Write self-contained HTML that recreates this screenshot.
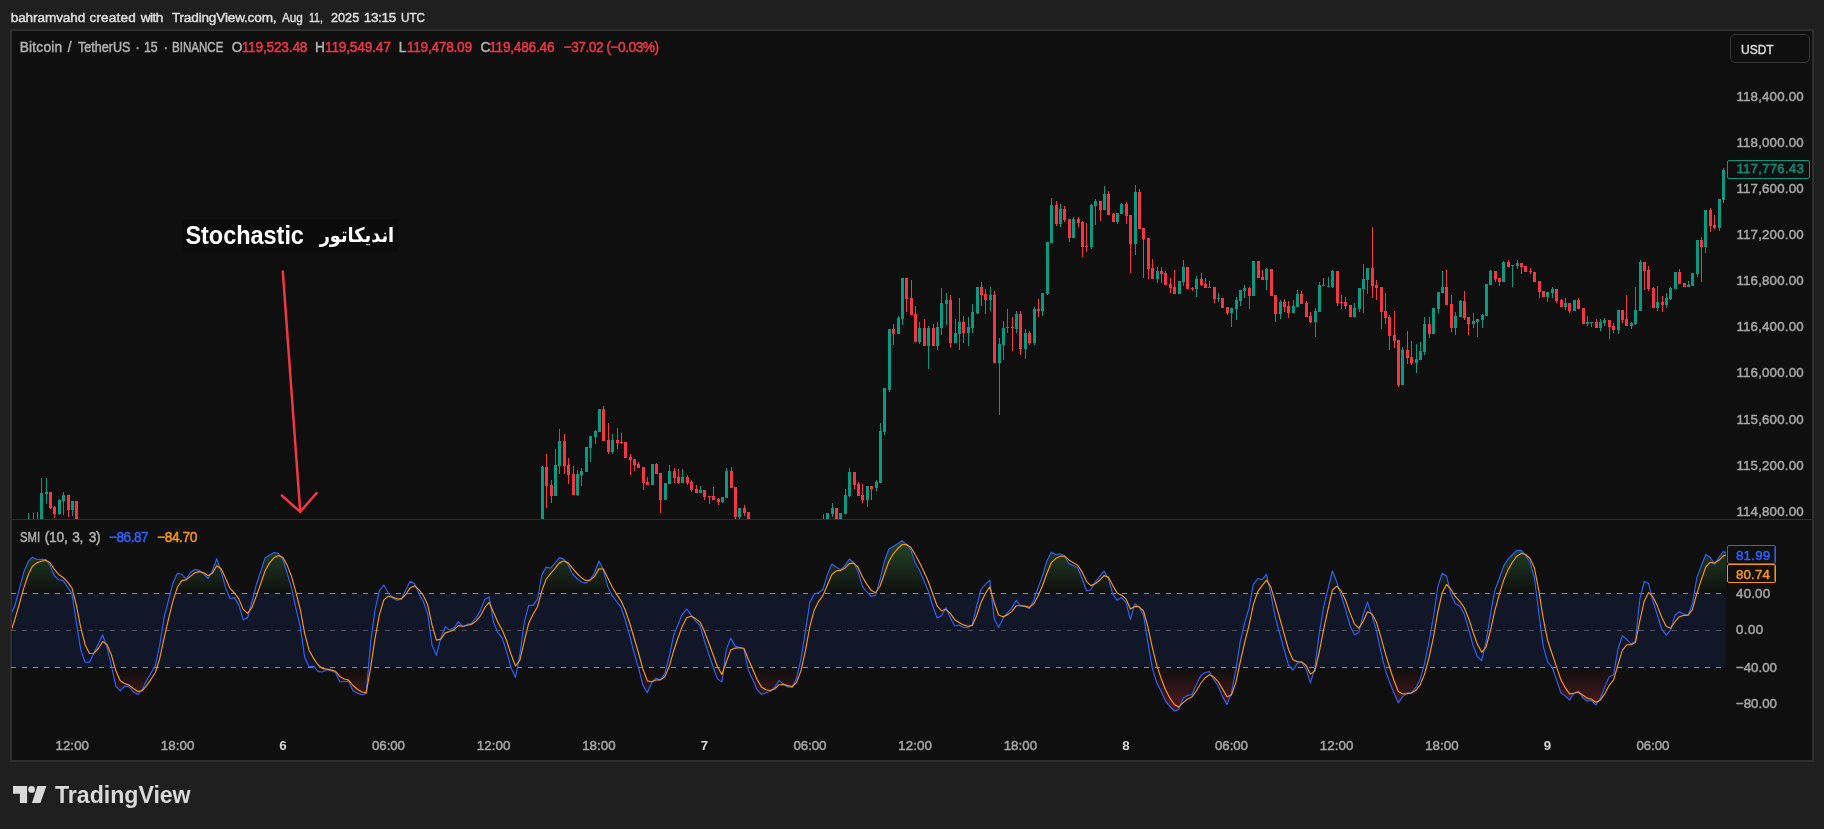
<!DOCTYPE html><html lang="en"><head><meta charset="utf-8"><title>BTCUSDT chart</title><style>html,body{margin:0;padding:0;background:#1f1f1f;}body{width:1824px;height:829px;position:relative;overflow:hidden;font-family:"Liberation Sans", "DejaVu Sans", sans-serif;}#frame{position:absolute;left:10px;top:29px;width:1800px;height:729px;border:2px solid #2e2e2e;background:#0f0f0f;}svg{position:absolute;left:0;top:0;}#txt{position:absolute;left:0;top:0;width:1824px;height:829px;will-change:transform;}.t{position:absolute;white-space:pre;line-height:1;}.usdt{position:absolute;left:1730px;top:34px;width:80px;height:29px;border:1px solid #363636;border-radius:5px;box-sizing:border-box;}.lbl{position:absolute;box-sizing:border-box;border:1px solid;border-radius:2px;background:#0f0f0f;}.lbl i{position:absolute;right:0;top:1px;bottom:1px;width:1px;opacity:.55;}.note{position:absolute;left:182px;top:219px;width:216px;height:33px;background:#0b0b0b;}</style></head><body><div id="frame"></div><svg width="1824" height="829" viewBox="0 0 1824 829" shape-rendering="crispEdges"><rect x="12" y="519" width="1800" height="1" fill="#2e2e2e"/><path fill="#089981" d="M28 513h1v6h-1zM41 478h1v41h-1zM40 493h3v26h-3zM46 478h1v26h-1zM45 492h3v2h-3zM59 499h1v16h-1zM58 500h3v14h-3zM63 492h1v23h-1zM62 495h3v6h-3zM72 501h1v15h-1zM71 501h3v9h-3zM542 466h1v53h-1zM541 467h3v52h-3zM555 449h1v47h-1zM554 465h3v31h-3zM559 429h1v45h-1zM558 441h3v25h-3zM577 470h1v26h-1zM576 474h3v21h-3zM581 468h1v18h-1zM580 471h3v4h-3zM586 447h1v25h-1zM585 447h3v25h-3zM590 436h1v26h-1zM589 436h3v12h-3zM595 430h1v14h-1zM594 431h3v6h-3zM599 409h1v23h-1zM598 409h3v23h-3zM612 434h1v20h-1zM611 440h3v12h-3zM652 464h1v21h-1zM651 464h3v21h-3zM665 483h1v17h-1zM664 483h3v17h-3zM669 465h1v19h-1zM668 471h3v13h-3zM682 469h1v14h-1zM681 477h3v6h-3zM700 486h1v7h-1zM699 490h3v3h-3zM722 497h1v6h-1zM721 497h3v5h-3zM726 468h1v30h-1zM725 471h3v27h-3zM739 508h1v11h-1zM738 508h3v9h-3zM823 514h1v5h-1zM827 513h1v6h-1zM826 513h3v6h-3zM832 503h1v14h-1zM831 508h3v6h-3zM840 513h1v6h-1zM839 513h3v6h-3zM845 489h1v25h-1zM844 495h3v19h-3zM849 468h1v29h-1zM848 472h3v24h-3zM867 486h1v21h-1zM866 486h3v14h-3zM876 480h1v11h-1zM875 482h3v6h-3zM880 423h1v60h-1zM879 431h3v52h-3zM884 388h1v47h-1zM883 388h3v44h-3zM889 329h1v63h-1zM888 329h3v61h-3zM898 316h1v18h-1zM897 318h3v16h-3zM902 278h1v47h-1zM901 278h3v41h-3zM919 322h1v22h-1zM918 328h3v14h-3zM928 326h1v43h-1zM927 328h3v18h-3zM937 322h1v28h-1zM936 327h3v19h-3zM941 288h1v47h-1zM940 303h3v25h-3zM946 293h1v32h-1zM945 300h3v4h-3zM955 319h1v24h-1zM954 333h3v10h-3zM959 298h1v52h-1zM958 322h3v12h-3zM968 317h1v29h-1zM967 327h3v6h-3zM972 304h1v29h-1zM971 312h3v16h-3zM977 287h1v27h-1zM976 287h3v26h-3zM990 287h1v24h-1zM989 295h3v5h-3zM999 338h1v77h-1zM998 344h3v19h-3zM1003 321h1v39h-1zM1002 328h3v17h-3zM1007 309h1v24h-1zM1006 327h3v1h-3zM1016 311h1v22h-1zM1015 314h3v15h-3zM1025 329h1v30h-1zM1024 333h3v16h-3zM1034 307h1v38h-1zM1033 309h3v34h-3zM1042 293h1v23h-1zM1041 293h3v18h-3zM1047 242h1v53h-1zM1046 242h3v52h-3zM1051 198h1v45h-1zM1050 205h3v38h-3zM1060 204h1v23h-1zM1059 209h3v15h-3zM1073 217h1v21h-1zM1072 219h3v19h-3zM1091 204h1v45h-1zM1090 205h3v42h-3zM1095 199h1v26h-1zM1094 201h3v5h-3zM1104 186h1v24h-1zM1103 194h3v16h-3zM1117 213h1v11h-1zM1116 213h3v9h-3zM1121 203h1v11h-1zM1120 204h3v10h-3zM1135 185h1v70h-1zM1134 192h3v52h-3zM1157 267h1v16h-1zM1156 271h3v8h-3zM1179 281h1v13h-1zM1178 281h3v13h-3zM1183 260h1v26h-1zM1182 267h3v15h-3zM1196 276h1v21h-1zM1195 279h3v10h-3zM1218 293h1v9h-1zM1217 298h3v1h-3zM1231 308h1v19h-1zM1230 308h3v5h-3zM1236 297h1v23h-1zM1235 300h3v9h-3zM1240 290h1v16h-1zM1239 290h3v11h-3zM1244 285h1v13h-1zM1243 288h3v3h-3zM1253 261h1v35h-1zM1252 261h3v35h-3zM1266 268h1v22h-1zM1265 269h3v11h-3zM1280 300h1v19h-1zM1279 302h3v12h-3zM1293 300h1v13h-1zM1292 306h3v7h-3zM1297 290h1v17h-1zM1296 294h3v13h-3zM1315 308h1v29h-1zM1314 311h3v11h-3zM1319 282h1v30h-1zM1318 285h3v27h-3zM1328 277h1v10h-1zM1327 286h3v1h-3zM1332 270h1v18h-1zM1331 271h3v16h-3zM1354 303h1v14h-1zM1353 308h3v9h-3zM1359 288h1v24h-1zM1358 288h3v21h-3zM1363 264h1v49h-1zM1362 279h3v10h-3zM1367 268h1v26h-1zM1366 268h3v12h-3zM1402 347h1v38h-1zM1401 350h3v35h-3zM1416 344h1v29h-1zM1415 359h3v4h-3zM1420 342h1v18h-1zM1419 351h3v9h-3zM1424 317h1v38h-1zM1423 324h3v28h-3zM1433 308h1v26h-1zM1432 308h3v26h-3zM1438 292h1v21h-1zM1437 292h3v17h-3zM1442 271h1v22h-1zM1441 287h3v6h-3zM1455 312h1v23h-1zM1454 316h3v12h-3zM1460 300h1v17h-1zM1459 301h3v16h-3zM1473 313h1v15h-1zM1472 321h3v3h-3zM1477 319h1v18h-1zM1476 319h3v3h-3zM1482 314h1v14h-1zM1481 315h3v5h-3zM1486 284h1v32h-1zM1485 284h3v32h-3zM1490 270h1v15h-1zM1489 271h3v14h-3zM1503 261h1v21h-1zM1502 262h3v20h-3zM1512 265h1v22h-1zM1511 265h3v1h-3zM1517 260h1v9h-1zM1516 263h3v3h-3zM1547 292h1v10h-1zM1546 292h3v5h-3zM1552 287h1v11h-1zM1551 289h3v4h-3zM1565 298h1v12h-1zM1564 303h3v4h-3zM1574 300h1v11h-1zM1573 300h3v11h-3zM1587 316h1v10h-1zM1586 322h3v2h-3zM1591 322h1v5h-1zM1590 322h3v1h-3zM1600 319h1v12h-1zM1599 322h3v6h-3zM1604 318h1v8h-1zM1603 320h3v3h-3zM1618 310h1v24h-1zM1617 310h3v20h-3zM1631 322h1v7h-1zM1630 323h3v3h-3zM1635 287h1v38h-1zM1634 310h3v14h-3zM1640 260h1v51h-1zM1639 262h3v49h-3zM1657 286h1v25h-1zM1656 302h3v6h-3zM1666 293h1v15h-1zM1665 298h3v7h-3zM1670 287h1v13h-1zM1669 288h3v11h-3zM1675 272h1v17h-1zM1674 272h3v17h-3zM1688 281h1v6h-1zM1687 285h3v2h-3zM1692 273h1v13h-1zM1691 273h3v13h-3zM1697 240h1v37h-1zM1696 240h3v34h-3zM1705 210h1v43h-1zM1704 210h3v37h-3zM1719 199h1v32h-1zM1718 199h3v29h-3zM1723 168h1v35h-1zM1722 170h3v30h-3z"/><path fill="#f23645" d="M33 513h1v6h-1zM37 512h1v7h-1zM50 492h1v17h-1zM49 492h3v16h-3zM54 506h1v12h-1zM53 507h3v7h-3zM68 495h1v22h-1zM67 495h3v15h-3zM76 501h1v18h-1zM75 501h3v18h-3zM546 454h1v54h-1zM545 467h3v19h-3zM551 480h1v23h-1zM550 485h3v11h-3zM564 434h1v40h-1zM563 441h3v25h-3zM568 458h1v26h-1zM567 465h3v10h-3zM573 466h1v29h-1zM572 474h3v21h-3zM603 406h1v35h-1zM602 409h3v32h-3zM608 423h1v31h-1zM607 440h3v12h-3zM617 428h1v21h-1zM616 440h3v3h-3zM621 433h1v11h-1zM620 442h3v1h-3zM625 442h1v16h-1zM624 442h3v16h-3zM630 454h1v21h-1zM629 457h3v3h-3zM634 459h1v12h-1zM633 459h3v6h-3zM638 462h1v6h-1zM637 464h3v4h-3zM643 467h1v23h-1zM642 467h3v16h-3zM647 477h1v8h-1zM646 482h3v3h-3zM656 463h1v11h-1zM655 464h3v10h-3zM660 473h1v40h-1zM659 473h3v27h-3zM674 468h1v15h-1zM673 471h3v7h-3zM678 469h1v15h-1zM677 477h3v6h-3zM687 475h1v10h-1zM686 477h3v6h-3zM691 480h1v12h-1zM690 482h3v8h-3zM696 485h1v8h-1zM695 489h3v4h-3zM704 490h1v10h-1zM703 490h3v7h-3zM709 496h1v8h-1zM708 496h3v1h-3zM713 487h1v13h-1zM712 496h3v4h-3zM718 498h1v7h-1zM717 499h3v3h-3zM731 467h1v21h-1zM730 471h3v17h-3zM735 487h1v32h-1zM734 487h3v30h-3zM744 505h1v11h-1zM743 508h3v5h-3zM748 512h1v7h-1zM747 512h3v7h-3zM836 508h1v11h-1zM835 508h3v11h-3zM854 472h1v17h-1zM853 472h3v13h-3zM858 482h1v14h-1zM857 484h3v12h-3zM862 484h1v19h-1zM861 495h3v5h-3zM871 486h1v14h-1zM870 486h3v3h-3zM893 324h1v21h-1zM892 329h3v5h-3zM906 278h1v34h-1zM905 278h3v21h-3zM911 280h1v35h-1zM910 298h3v17h-3zM915 306h1v36h-1zM914 314h3v28h-3zM924 319h1v27h-1zM923 328h3v18h-3zM933 324h1v22h-1zM932 328h3v18h-3zM950 295h1v53h-1zM949 300h3v43h-3zM963 316h1v27h-1zM962 322h3v11h-3zM981 282h1v24h-1zM980 287h3v8h-3zM985 289h1v25h-1zM984 294h3v6h-3zM994 291h1v72h-1zM993 295h3v68h-3zM1012 317h1v34h-1zM1011 327h3v1h-3zM1020 311h1v44h-1zM1019 314h3v35h-3zM1029 331h1v14h-1zM1028 333h3v10h-3zM1038 299h1v18h-1zM1037 309h3v2h-3zM1056 201h1v25h-1zM1055 205h3v19h-3zM1064 206h1v16h-1zM1063 209h3v11h-3zM1069 219h1v23h-1zM1068 219h3v19h-3zM1078 217h1v10h-1zM1077 219h3v4h-3zM1082 221h1v36h-1zM1081 222h3v25h-3zM1086 223h1v29h-1zM1085 246h3v1h-3zM1100 201h1v20h-1zM1099 201h3v9h-3zM1108 191h1v24h-1zM1107 194h3v21h-3zM1113 213h1v9h-1zM1112 214h3v8h-3zM1126 202h1v22h-1zM1125 204h3v12h-3zM1130 215h1v58h-1zM1129 215h3v29h-3zM1139 189h1v40h-1zM1138 192h3v37h-3zM1143 228h1v50h-1zM1142 228h3v11h-3zM1148 238h1v41h-1zM1147 238h3v31h-3zM1152 259h1v20h-1zM1151 268h3v11h-3zM1161 267h1v16h-1zM1160 271h3v3h-3zM1165 271h1v14h-1zM1164 273h3v12h-3zM1170 278h1v15h-1zM1169 284h3v4h-3zM1174 270h1v24h-1zM1173 287h3v7h-3zM1187 267h1v22h-1zM1186 267h3v22h-3zM1192 287h1v4h-1zM1191 288h3v1h-3zM1201 273h1v13h-1zM1200 279h3v6h-3zM1205 278h1v10h-1zM1204 284h3v4h-3zM1209 281h1v7h-1zM1208 287h3v1h-3zM1214 287h1v16h-1zM1213 287h3v12h-3zM1222 298h1v10h-1zM1221 298h3v10h-3zM1227 307h1v8h-1zM1226 307h3v6h-3zM1249 287h1v22h-1zM1248 288h3v8h-3zM1258 261h1v17h-1zM1257 261h3v17h-3zM1262 270h1v10h-1zM1261 277h3v3h-3zM1271 269h1v27h-1zM1270 269h3v27h-3zM1275 295h1v27h-1zM1274 295h3v19h-3zM1284 299h1v13h-1zM1283 302h3v5h-3zM1288 301h1v17h-1zM1287 306h3v7h-3zM1301 291h1v13h-1zM1300 294h3v10h-3zM1306 301h1v16h-1zM1305 303h3v14h-3zM1310 312h1v11h-1zM1309 316h3v6h-3zM1323 278h1v8h-1zM1322 285h3v1h-3zM1337 271h1v35h-1zM1336 271h3v32h-3zM1341 295h1v14h-1zM1340 302h3v1h-3zM1345 297h1v12h-1zM1344 302h3v4h-3zM1350 305h1v12h-1zM1349 305h3v12h-3zM1372 227h1v71h-1zM1371 268h3v18h-3zM1376 280h1v20h-1zM1375 285h3v3h-3zM1381 287h1v42h-1zM1380 287h3v25h-3zM1385 293h1v31h-1zM1384 311h3v7h-3zM1389 315h1v35h-1zM1388 317h3v19h-3zM1394 311h1v37h-1zM1393 335h3v6h-3zM1398 340h1v47h-1zM1397 340h3v45h-3zM1407 331h1v33h-1zM1406 350h3v8h-3zM1411 341h1v24h-1zM1410 357h3v6h-3zM1429 317h1v21h-1zM1428 324h3v10h-3zM1446 270h1v35h-1zM1445 287h3v18h-3zM1451 295h1v37h-1zM1450 304h3v24h-3zM1464 291h1v29h-1zM1463 301h3v17h-3zM1468 317h1v18h-1zM1467 317h3v7h-3zM1495 271h1v11h-1zM1494 271h3v8h-3zM1499 278h1v8h-1zM1498 278h3v4h-3zM1508 260h1v7h-1zM1507 262h3v5h-3zM1521 263h1v11h-1zM1520 263h3v4h-3zM1525 266h1v6h-1zM1524 266h3v6h-3zM1530 268h1v6h-1zM1529 271h3v1h-3zM1534 272h1v10h-1zM1533 272h3v10h-3zM1539 281h1v17h-1zM1538 281h3v11h-3zM1543 291h1v6h-1zM1542 291h3v6h-3zM1556 289h1v14h-1zM1555 289h3v12h-3zM1561 299h1v8h-1zM1560 300h3v7h-3zM1569 303h1v10h-1zM1568 303h3v8h-3zM1578 298h1v11h-1zM1577 300h3v9h-3zM1583 308h1v16h-1zM1582 308h3v16h-3zM1596 319h1v9h-1zM1595 322h3v6h-3zM1609 320h1v19h-1zM1608 320h3v7h-3zM1613 323h1v10h-1zM1612 326h3v4h-3zM1622 310h1v13h-1zM1621 310h3v10h-3zM1626 295h1v31h-1zM1625 319h3v7h-3zM1644 262h1v28h-1zM1643 262h3v9h-3zM1648 266h1v25h-1zM1647 270h3v19h-3zM1653 287h1v21h-1zM1652 288h3v20h-3zM1662 296h1v16h-1zM1661 302h3v3h-3zM1679 269h1v15h-1zM1678 272h3v12h-3zM1684 283h1v4h-1zM1683 283h3v4h-3zM1701 237h1v45h-1zM1700 240h3v7h-3zM1710 208h1v24h-1zM1709 210h3v16h-3zM1714 215h1v14h-1zM1713 225h3v3h-3z"/><g shape-rendering="geometricPrecision"><defs><clipPath id="cpo"><rect x="12" y="521" width="1714" height="205"/></clipPath><clipPath id="cup"><rect x="12" y="521" width="1714" height="72.5"/></clipPath><clipPath id="cdn"><rect x="12" y="667.5" width="1714" height="60"/></clipPath><linearGradient id="gup" gradientUnits="userSpaceOnUse" x1="0" y1="538" x2="0" y2="593.5"><stop offset="0" stop-color="#4caf50" stop-opacity="0.36"/><stop offset="1" stop-color="#4caf50" stop-opacity="0"/></linearGradient><linearGradient id="gdn" gradientUnits="userSpaceOnUse" x1="0" y1="667.5" x2="0" y2="723"><stop offset="0" stop-color="#f23645" stop-opacity="0"/><stop offset="1" stop-color="#f23645" stop-opacity="0.38"/></linearGradient></defs><rect x="12" y="593.5" width="1714" height="74.0" fill="#2962ff" fill-opacity="0.1"/><g clip-path="url(#cup)"><path d="M6.0 615.2L10.4 615.2L14.8 606.0L19.2 589.4L23.6 572.8L28.0 562.0L32.4 557.2L36.8 559.5L41.2 559.4L45.5 559.3L49.9 564.8L54.3 575.8L58.7 579.7L63.1 580.4L67.5 586.9L71.9 593.4L76.3 622.1L80.7 649.6L85.1 662.2L89.5 662.2L93.9 653.0L98.3 643.9L102.6 634.7L107.0 647.3L111.4 665.6L115.8 686.2L120.2 690.8L124.6 686.2L129.0 686.7L133.4 692.0L137.8 694.5L142.2 689.7L146.6 680.5L151.0 673.1L155.3 665.6L159.7 645.0L164.1 617.5L168.5 600.3L172.9 583.1L177.3 573.5L181.7 574.0L186.1 579.2L190.5 572.4L194.9 569.4L199.3 570.5L203.7 574.0L208.1 578.5L212.4 570.5L216.8 558.6L221.2 571.7L225.6 587.7L230.0 598.5L234.4 597.6L238.8 604.9L243.2 619.8L247.6 617.5L252.0 601.5L256.4 584.3L260.8 571.1L265.1 557.9L269.5 555.2L273.9 552.6L278.3 553.3L282.7 559.1L287.1 572.8L291.5 587.7L295.9 608.3L300.3 626.7L304.7 657.6L309.1 666.8L313.5 666.1L317.9 671.4L322.2 672.0L326.6 669.8L331.0 670.7L335.4 672.5L339.8 681.7L344.2 681.7L348.6 681.2L353.0 690.8L357.4 693.1L361.8 694.7L366.2 693.6L370.6 642.7L374.9 610.6L379.3 591.1L383.7 585.0L388.1 592.3L392.5 598.0L396.9 600.3L401.3 599.2L405.7 590.0L410.1 581.3L414.5 583.6L418.9 593.4L423.3 601.5L427.7 614.1L432.0 645.0L436.4 655.3L440.8 638.1L445.2 626.7L449.6 630.1L454.0 627.8L458.4 621.6L462.8 626.7L467.2 624.4L471.6 623.2L476.0 618.0L480.4 610.6L484.7 599.6L489.1 596.9L493.5 622.1L497.9 632.4L502.3 638.1L506.7 651.9L511.1 667.9L515.5 677.5L519.9 654.2L524.3 622.1L528.7 605.4L533.1 605.4L537.5 599.2L541.8 575.1L546.2 567.1L550.6 568.2L555.0 563.0L559.4 557.5L563.8 559.1L568.2 564.8L572.6 574.0L577.0 578.5L581.4 582.0L585.8 583.1L590.2 579.7L594.5 572.8L598.9 560.9L603.3 569.4L607.7 586.6L612.1 595.7L616.5 601.5L620.9 607.2L625.3 619.8L629.7 635.8L634.1 653.0L638.5 667.9L642.9 685.1L647.3 692.7L651.6 682.8L656.0 678.2L660.4 679.8L664.8 673.6L669.2 656.5L673.6 635.8L678.0 624.4L682.4 614.1L686.8 609.0L691.2 615.2L695.6 620.9L700.0 625.5L704.3 640.4L708.7 654.2L713.1 666.8L717.5 678.9L721.9 682.1L726.3 649.6L730.7 638.1L735.1 646.1L739.5 647.3L743.9 648.9L748.3 670.2L752.7 679.4L757.1 689.7L761.4 694.3L765.8 692.7L770.2 691.3L774.6 687.4L779.0 680.5L783.4 684.0L787.8 686.9L792.2 687.4L796.6 678.2L801.0 658.8L805.4 631.2L809.8 602.6L814.1 594.1L818.5 592.8L822.9 589.5L827.3 575.1L831.7 564.1L836.1 567.1L840.5 569.8L844.9 565.9L849.3 559.1L853.7 562.5L858.1 571.7L862.5 586.6L866.9 591.8L871.2 596.4L875.6 595.3L880.0 579.7L884.4 561.4L888.8 549.2L893.2 546.5L897.6 543.7L902.0 540.7L906.4 544.2L910.8 549.9L915.2 562.5L919.6 570.5L923.9 580.8L928.3 591.1L932.7 606.0L937.1 618.0L941.5 615.7L945.9 607.9L950.3 617.5L954.7 626.0L959.1 625.1L963.5 627.4L967.9 627.8L972.3 624.4L976.7 606.0L981.0 589.5L985.4 584.3L989.8 580.1L994.2 618.6L998.6 627.4L1003.0 618.6L1007.4 612.9L1011.8 607.9L1016.2 600.3L1020.6 605.6L1025.0 606.5L1029.4 608.8L1033.7 600.3L1038.1 587.7L1042.5 575.8L1046.9 560.7L1051.3 552.2L1055.7 554.5L1060.1 553.8L1064.5 556.1L1068.9 563.6L1073.3 565.5L1077.7 567.8L1082.1 578.5L1086.5 590.7L1090.8 590.0L1095.2 582.0L1099.6 576.7L1104.0 571.0L1108.4 578.5L1112.8 594.1L1117.2 600.3L1121.6 597.6L1126.0 602.6L1130.4 619.3L1134.8 603.8L1139.2 607.2L1143.5 615.2L1147.9 642.7L1152.3 667.9L1156.7 682.8L1161.1 691.3L1165.5 701.1L1169.9 706.4L1174.3 711.0L1178.7 709.6L1183.1 698.2L1187.5 695.4L1191.9 694.7L1196.3 685.1L1200.6 675.9L1205.0 672.5L1209.4 671.6L1213.8 679.4L1218.2 686.2L1222.6 696.6L1227.0 704.6L1231.4 693.1L1235.8 670.2L1240.2 641.6L1244.6 623.2L1249.0 608.3L1253.3 584.3L1257.7 578.5L1262.1 579.7L1266.5 574.4L1270.9 594.6L1275.3 617.5L1279.7 633.5L1284.1 649.6L1288.5 665.2L1292.9 670.2L1297.3 663.3L1301.7 662.2L1306.1 669.1L1310.4 682.8L1314.8 667.9L1319.2 633.5L1323.6 607.2L1328.0 588.9L1332.4 571.0L1336.8 582.0L1341.2 595.7L1345.6 609.5L1350.0 625.5L1354.4 634.7L1358.8 632.4L1363.1 615.2L1367.5 601.9L1371.9 615.7L1376.3 630.1L1380.7 650.7L1385.1 669.1L1389.5 681.7L1393.9 693.1L1398.3 702.8L1402.7 696.6L1407.1 693.1L1411.5 692.7L1415.9 687.4L1420.2 679.4L1424.6 663.3L1429.0 641.6L1433.4 617.5L1437.8 586.6L1442.2 573.3L1446.6 576.2L1451.0 594.6L1455.4 603.8L1459.8 606.0L1464.2 614.1L1468.6 629.0L1472.9 645.0L1477.3 656.5L1481.7 660.6L1486.1 641.6L1490.5 614.1L1494.9 590.0L1499.3 578.5L1503.7 565.9L1508.1 559.1L1512.5 554.5L1516.9 550.4L1521.3 550.4L1525.7 555.6L1530.0 562.5L1534.4 577.4L1538.8 612.9L1543.2 646.1L1547.6 662.2L1552.0 666.8L1556.4 679.4L1560.8 692.7L1565.2 695.9L1569.6 700.0L1574.0 692.7L1578.4 691.3L1582.7 697.7L1587.1 701.1L1591.5 700.5L1595.9 705.0L1600.3 698.2L1604.7 687.4L1609.1 677.1L1613.5 674.8L1617.9 649.6L1622.3 635.8L1626.7 639.3L1631.1 644.5L1635.5 640.4L1639.8 599.2L1644.2 581.5L1648.6 583.6L1653.0 601.5L1657.4 615.2L1661.8 629.0L1666.2 635.1L1670.6 630.1L1675.0 615.2L1679.4 611.8L1683.8 614.1L1688.2 614.8L1692.5 603.8L1696.9 577.4L1701.3 565.9L1705.7 554.5L1710.1 557.2L1714.5 564.1L1718.9 557.5L1723.3 551.5L1727.7 553.3L1727.7 593.5L6.0 593.5z" fill="url(#gup)"/></g><g clip-path="url(#cdn)"><path d="M6.0 615.2L10.4 615.2L14.8 606.0L19.2 589.4L23.6 572.8L28.0 562.0L32.4 557.2L36.8 559.5L41.2 559.4L45.5 559.3L49.9 564.8L54.3 575.8L58.7 579.7L63.1 580.4L67.5 586.9L71.9 593.4L76.3 622.1L80.7 649.6L85.1 662.2L89.5 662.2L93.9 653.0L98.3 643.9L102.6 634.7L107.0 647.3L111.4 665.6L115.8 686.2L120.2 690.8L124.6 686.2L129.0 686.7L133.4 692.0L137.8 694.5L142.2 689.7L146.6 680.5L151.0 673.1L155.3 665.6L159.7 645.0L164.1 617.5L168.5 600.3L172.9 583.1L177.3 573.5L181.7 574.0L186.1 579.2L190.5 572.4L194.9 569.4L199.3 570.5L203.7 574.0L208.1 578.5L212.4 570.5L216.8 558.6L221.2 571.7L225.6 587.7L230.0 598.5L234.4 597.6L238.8 604.9L243.2 619.8L247.6 617.5L252.0 601.5L256.4 584.3L260.8 571.1L265.1 557.9L269.5 555.2L273.9 552.6L278.3 553.3L282.7 559.1L287.1 572.8L291.5 587.7L295.9 608.3L300.3 626.7L304.7 657.6L309.1 666.8L313.5 666.1L317.9 671.4L322.2 672.0L326.6 669.8L331.0 670.7L335.4 672.5L339.8 681.7L344.2 681.7L348.6 681.2L353.0 690.8L357.4 693.1L361.8 694.7L366.2 693.6L370.6 642.7L374.9 610.6L379.3 591.1L383.7 585.0L388.1 592.3L392.5 598.0L396.9 600.3L401.3 599.2L405.7 590.0L410.1 581.3L414.5 583.6L418.9 593.4L423.3 601.5L427.7 614.1L432.0 645.0L436.4 655.3L440.8 638.1L445.2 626.7L449.6 630.1L454.0 627.8L458.4 621.6L462.8 626.7L467.2 624.4L471.6 623.2L476.0 618.0L480.4 610.6L484.7 599.6L489.1 596.9L493.5 622.1L497.9 632.4L502.3 638.1L506.7 651.9L511.1 667.9L515.5 677.5L519.9 654.2L524.3 622.1L528.7 605.4L533.1 605.4L537.5 599.2L541.8 575.1L546.2 567.1L550.6 568.2L555.0 563.0L559.4 557.5L563.8 559.1L568.2 564.8L572.6 574.0L577.0 578.5L581.4 582.0L585.8 583.1L590.2 579.7L594.5 572.8L598.9 560.9L603.3 569.4L607.7 586.6L612.1 595.7L616.5 601.5L620.9 607.2L625.3 619.8L629.7 635.8L634.1 653.0L638.5 667.9L642.9 685.1L647.3 692.7L651.6 682.8L656.0 678.2L660.4 679.8L664.8 673.6L669.2 656.5L673.6 635.8L678.0 624.4L682.4 614.1L686.8 609.0L691.2 615.2L695.6 620.9L700.0 625.5L704.3 640.4L708.7 654.2L713.1 666.8L717.5 678.9L721.9 682.1L726.3 649.6L730.7 638.1L735.1 646.1L739.5 647.3L743.9 648.9L748.3 670.2L752.7 679.4L757.1 689.7L761.4 694.3L765.8 692.7L770.2 691.3L774.6 687.4L779.0 680.5L783.4 684.0L787.8 686.9L792.2 687.4L796.6 678.2L801.0 658.8L805.4 631.2L809.8 602.6L814.1 594.1L818.5 592.8L822.9 589.5L827.3 575.1L831.7 564.1L836.1 567.1L840.5 569.8L844.9 565.9L849.3 559.1L853.7 562.5L858.1 571.7L862.5 586.6L866.9 591.8L871.2 596.4L875.6 595.3L880.0 579.7L884.4 561.4L888.8 549.2L893.2 546.5L897.6 543.7L902.0 540.7L906.4 544.2L910.8 549.9L915.2 562.5L919.6 570.5L923.9 580.8L928.3 591.1L932.7 606.0L937.1 618.0L941.5 615.7L945.9 607.9L950.3 617.5L954.7 626.0L959.1 625.1L963.5 627.4L967.9 627.8L972.3 624.4L976.7 606.0L981.0 589.5L985.4 584.3L989.8 580.1L994.2 618.6L998.6 627.4L1003.0 618.6L1007.4 612.9L1011.8 607.9L1016.2 600.3L1020.6 605.6L1025.0 606.5L1029.4 608.8L1033.7 600.3L1038.1 587.7L1042.5 575.8L1046.9 560.7L1051.3 552.2L1055.7 554.5L1060.1 553.8L1064.5 556.1L1068.9 563.6L1073.3 565.5L1077.7 567.8L1082.1 578.5L1086.5 590.7L1090.8 590.0L1095.2 582.0L1099.6 576.7L1104.0 571.0L1108.4 578.5L1112.8 594.1L1117.2 600.3L1121.6 597.6L1126.0 602.6L1130.4 619.3L1134.8 603.8L1139.2 607.2L1143.5 615.2L1147.9 642.7L1152.3 667.9L1156.7 682.8L1161.1 691.3L1165.5 701.1L1169.9 706.4L1174.3 711.0L1178.7 709.6L1183.1 698.2L1187.5 695.4L1191.9 694.7L1196.3 685.1L1200.6 675.9L1205.0 672.5L1209.4 671.6L1213.8 679.4L1218.2 686.2L1222.6 696.6L1227.0 704.6L1231.4 693.1L1235.8 670.2L1240.2 641.6L1244.6 623.2L1249.0 608.3L1253.3 584.3L1257.7 578.5L1262.1 579.7L1266.5 574.4L1270.9 594.6L1275.3 617.5L1279.7 633.5L1284.1 649.6L1288.5 665.2L1292.9 670.2L1297.3 663.3L1301.7 662.2L1306.1 669.1L1310.4 682.8L1314.8 667.9L1319.2 633.5L1323.6 607.2L1328.0 588.9L1332.4 571.0L1336.8 582.0L1341.2 595.7L1345.6 609.5L1350.0 625.5L1354.4 634.7L1358.8 632.4L1363.1 615.2L1367.5 601.9L1371.9 615.7L1376.3 630.1L1380.7 650.7L1385.1 669.1L1389.5 681.7L1393.9 693.1L1398.3 702.8L1402.7 696.6L1407.1 693.1L1411.5 692.7L1415.9 687.4L1420.2 679.4L1424.6 663.3L1429.0 641.6L1433.4 617.5L1437.8 586.6L1442.2 573.3L1446.6 576.2L1451.0 594.6L1455.4 603.8L1459.8 606.0L1464.2 614.1L1468.6 629.0L1472.9 645.0L1477.3 656.5L1481.7 660.6L1486.1 641.6L1490.5 614.1L1494.9 590.0L1499.3 578.5L1503.7 565.9L1508.1 559.1L1512.5 554.5L1516.9 550.4L1521.3 550.4L1525.7 555.6L1530.0 562.5L1534.4 577.4L1538.8 612.9L1543.2 646.1L1547.6 662.2L1552.0 666.8L1556.4 679.4L1560.8 692.7L1565.2 695.9L1569.6 700.0L1574.0 692.7L1578.4 691.3L1582.7 697.7L1587.1 701.1L1591.5 700.5L1595.9 705.0L1600.3 698.2L1604.7 687.4L1609.1 677.1L1613.5 674.8L1617.9 649.6L1622.3 635.8L1626.7 639.3L1631.1 644.5L1635.5 640.4L1639.8 599.2L1644.2 581.5L1648.6 583.6L1653.0 601.5L1657.4 615.2L1661.8 629.0L1666.2 635.1L1670.6 630.1L1675.0 615.2L1679.4 611.8L1683.8 614.1L1688.2 614.8L1692.5 603.8L1696.9 577.4L1701.3 565.9L1705.7 554.5L1710.1 557.2L1714.5 564.1L1718.9 557.5L1723.3 551.5L1727.7 553.3L1727.7 667.5L6.0 667.5z" fill="url(#gdn)"/></g><path d="M11 593.5H1726" stroke="#8c8c8c" stroke-opacity="1" stroke-width="1" stroke-dasharray="5 6" fill="none"/><path d="M11 630.5H1726" stroke="#8c8c8c" stroke-opacity="0.5" stroke-width="1" stroke-dasharray="5 6" fill="none"/><path d="M11 667.5H1726" stroke="#8c8c8c" stroke-opacity="1" stroke-width="1" stroke-dasharray="5 6" fill="none"/><g clip-path="url(#cpo)" fill="none" stroke-linejoin="round" stroke-linecap="round" stroke-width="1.15"><path d="M6.0 615.2L10.4 615.2L14.8 606.0L19.2 589.4L23.6 572.8L28.0 562.0L32.4 557.2L36.8 559.5L41.2 559.4L45.5 559.3L49.9 564.8L54.3 575.8L58.7 579.7L63.1 580.4L67.5 586.9L71.9 593.4L76.3 622.1L80.7 649.6L85.1 662.2L89.5 662.2L93.9 653.0L98.3 643.9L102.6 634.7L107.0 647.3L111.4 665.6L115.8 686.2L120.2 690.8L124.6 686.2L129.0 686.7L133.4 692.0L137.8 694.5L142.2 689.7L146.6 680.5L151.0 673.1L155.3 665.6L159.7 645.0L164.1 617.5L168.5 600.3L172.9 583.1L177.3 573.5L181.7 574.0L186.1 579.2L190.5 572.4L194.9 569.4L199.3 570.5L203.7 574.0L208.1 578.5L212.4 570.5L216.8 558.6L221.2 571.7L225.6 587.7L230.0 598.5L234.4 597.6L238.8 604.9L243.2 619.8L247.6 617.5L252.0 601.5L256.4 584.3L260.8 571.1L265.1 557.9L269.5 555.2L273.9 552.6L278.3 553.3L282.7 559.1L287.1 572.8L291.5 587.7L295.9 608.3L300.3 626.7L304.7 657.6L309.1 666.8L313.5 666.1L317.9 671.4L322.2 672.0L326.6 669.8L331.0 670.7L335.4 672.5L339.8 681.7L344.2 681.7L348.6 681.2L353.0 690.8L357.4 693.1L361.8 694.7L366.2 693.6L370.6 642.7L374.9 610.6L379.3 591.1L383.7 585.0L388.1 592.3L392.5 598.0L396.9 600.3L401.3 599.2L405.7 590.0L410.1 581.3L414.5 583.6L418.9 593.4L423.3 601.5L427.7 614.1L432.0 645.0L436.4 655.3L440.8 638.1L445.2 626.7L449.6 630.1L454.0 627.8L458.4 621.6L462.8 626.7L467.2 624.4L471.6 623.2L476.0 618.0L480.4 610.6L484.7 599.6L489.1 596.9L493.5 622.1L497.9 632.4L502.3 638.1L506.7 651.9L511.1 667.9L515.5 677.5L519.9 654.2L524.3 622.1L528.7 605.4L533.1 605.4L537.5 599.2L541.8 575.1L546.2 567.1L550.6 568.2L555.0 563.0L559.4 557.5L563.8 559.1L568.2 564.8L572.6 574.0L577.0 578.5L581.4 582.0L585.8 583.1L590.2 579.7L594.5 572.8L598.9 560.9L603.3 569.4L607.7 586.6L612.1 595.7L616.5 601.5L620.9 607.2L625.3 619.8L629.7 635.8L634.1 653.0L638.5 667.9L642.9 685.1L647.3 692.7L651.6 682.8L656.0 678.2L660.4 679.8L664.8 673.6L669.2 656.5L673.6 635.8L678.0 624.4L682.4 614.1L686.8 609.0L691.2 615.2L695.6 620.9L700.0 625.5L704.3 640.4L708.7 654.2L713.1 666.8L717.5 678.9L721.9 682.1L726.3 649.6L730.7 638.1L735.1 646.1L739.5 647.3L743.9 648.9L748.3 670.2L752.7 679.4L757.1 689.7L761.4 694.3L765.8 692.7L770.2 691.3L774.6 687.4L779.0 680.5L783.4 684.0L787.8 686.9L792.2 687.4L796.6 678.2L801.0 658.8L805.4 631.2L809.8 602.6L814.1 594.1L818.5 592.8L822.9 589.5L827.3 575.1L831.7 564.1L836.1 567.1L840.5 569.8L844.9 565.9L849.3 559.1L853.7 562.5L858.1 571.7L862.5 586.6L866.9 591.8L871.2 596.4L875.6 595.3L880.0 579.7L884.4 561.4L888.8 549.2L893.2 546.5L897.6 543.7L902.0 540.7L906.4 544.2L910.8 549.9L915.2 562.5L919.6 570.5L923.9 580.8L928.3 591.1L932.7 606.0L937.1 618.0L941.5 615.7L945.9 607.9L950.3 617.5L954.7 626.0L959.1 625.1L963.5 627.4L967.9 627.8L972.3 624.4L976.7 606.0L981.0 589.5L985.4 584.3L989.8 580.1L994.2 618.6L998.6 627.4L1003.0 618.6L1007.4 612.9L1011.8 607.9L1016.2 600.3L1020.6 605.6L1025.0 606.5L1029.4 608.8L1033.7 600.3L1038.1 587.7L1042.5 575.8L1046.9 560.7L1051.3 552.2L1055.7 554.5L1060.1 553.8L1064.5 556.1L1068.9 563.6L1073.3 565.5L1077.7 567.8L1082.1 578.5L1086.5 590.7L1090.8 590.0L1095.2 582.0L1099.6 576.7L1104.0 571.0L1108.4 578.5L1112.8 594.1L1117.2 600.3L1121.6 597.6L1126.0 602.6L1130.4 619.3L1134.8 603.8L1139.2 607.2L1143.5 615.2L1147.9 642.7L1152.3 667.9L1156.7 682.8L1161.1 691.3L1165.5 701.1L1169.9 706.4L1174.3 711.0L1178.7 709.6L1183.1 698.2L1187.5 695.4L1191.9 694.7L1196.3 685.1L1200.6 675.9L1205.0 672.5L1209.4 671.6L1213.8 679.4L1218.2 686.2L1222.6 696.6L1227.0 704.6L1231.4 693.1L1235.8 670.2L1240.2 641.6L1244.6 623.2L1249.0 608.3L1253.3 584.3L1257.7 578.5L1262.1 579.7L1266.5 574.4L1270.9 594.6L1275.3 617.5L1279.7 633.5L1284.1 649.6L1288.5 665.2L1292.9 670.2L1297.3 663.3L1301.7 662.2L1306.1 669.1L1310.4 682.8L1314.8 667.9L1319.2 633.5L1323.6 607.2L1328.0 588.9L1332.4 571.0L1336.8 582.0L1341.2 595.7L1345.6 609.5L1350.0 625.5L1354.4 634.7L1358.8 632.4L1363.1 615.2L1367.5 601.9L1371.9 615.7L1376.3 630.1L1380.7 650.7L1385.1 669.1L1389.5 681.7L1393.9 693.1L1398.3 702.8L1402.7 696.6L1407.1 693.1L1411.5 692.7L1415.9 687.4L1420.2 679.4L1424.6 663.3L1429.0 641.6L1433.4 617.5L1437.8 586.6L1442.2 573.3L1446.6 576.2L1451.0 594.6L1455.4 603.8L1459.8 606.0L1464.2 614.1L1468.6 629.0L1472.9 645.0L1477.3 656.5L1481.7 660.6L1486.1 641.6L1490.5 614.1L1494.9 590.0L1499.3 578.5L1503.7 565.9L1508.1 559.1L1512.5 554.5L1516.9 550.4L1521.3 550.4L1525.7 555.6L1530.0 562.5L1534.4 577.4L1538.8 612.9L1543.2 646.1L1547.6 662.2L1552.0 666.8L1556.4 679.4L1560.8 692.7L1565.2 695.9L1569.6 700.0L1574.0 692.7L1578.4 691.3L1582.7 697.7L1587.1 701.1L1591.5 700.5L1595.9 705.0L1600.3 698.2L1604.7 687.4L1609.1 677.1L1613.5 674.8L1617.9 649.6L1622.3 635.8L1626.7 639.3L1631.1 644.5L1635.5 640.4L1639.8 599.2L1644.2 581.5L1648.6 583.6L1653.0 601.5L1657.4 615.2L1661.8 629.0L1666.2 635.1L1670.6 630.1L1675.0 615.2L1679.4 611.8L1683.8 614.1L1688.2 614.8L1692.5 603.8L1696.9 577.4L1701.3 565.9L1705.7 554.5L1710.1 557.2L1714.5 564.1L1718.9 557.5L1723.3 551.5L1727.7 553.3" stroke="#2962ff"/><path d="M6.0 650.7L10.4 633.0L14.8 619.5L19.2 604.5L23.6 588.6L28.0 575.3L32.4 566.3L36.8 562.9L41.2 561.2L45.5 560.2L49.9 562.5L54.3 569.1L58.7 574.4L63.1 577.4L67.5 582.2L71.9 587.8L76.3 604.9L80.7 627.3L85.1 644.7L89.5 653.5L93.9 653.2L98.3 648.5L102.6 641.6L107.0 644.5L111.4 655.0L115.8 670.6L120.2 680.7L124.6 683.5L129.0 685.1L133.4 688.5L137.8 691.5L142.2 690.6L146.6 685.6L151.0 679.3L155.3 672.5L159.7 658.7L164.1 638.1L168.5 619.2L172.9 601.2L177.3 587.3L181.7 580.6L186.1 579.9L190.5 576.1L194.9 572.8L199.3 571.6L203.7 572.8L208.1 575.7L212.4 573.1L216.8 565.8L221.2 568.8L225.6 578.2L230.0 588.4L234.4 593.0L238.8 598.9L243.2 609.4L247.6 613.4L252.0 607.4L256.4 595.9L260.8 583.5L265.1 570.7L269.5 562.9L273.9 557.8L278.3 555.6L282.7 557.3L287.1 565.1L291.5 576.4L295.9 592.4L300.3 609.5L304.7 633.6L309.1 650.2L313.5 658.1L317.9 664.7L322.2 668.4L326.6 669.1L331.0 669.9L335.4 671.2L339.8 676.4L344.2 679.0L348.6 680.1L353.0 685.5L357.4 689.3L361.8 692.0L366.2 692.8L370.6 667.8L374.9 639.2L379.3 615.2L383.7 600.1L388.1 596.2L392.5 597.1L396.9 598.7L401.3 598.9L405.7 594.5L410.1 587.9L414.5 585.7L418.9 589.6L423.3 595.5L427.7 604.8L432.0 624.9L436.4 640.1L440.8 639.1L445.2 632.9L449.6 631.5L454.0 629.7L458.4 625.6L462.8 626.2L467.2 625.3L471.6 624.2L476.0 621.1L480.4 615.9L484.7 607.7L489.1 602.3L493.5 612.2L497.9 622.3L502.3 630.2L506.7 641.0L511.1 654.5L515.5 666.0L519.9 660.1L524.3 641.1L528.7 623.2L533.1 614.3L537.5 606.7L541.8 590.9L546.2 579.0L550.6 573.6L555.0 568.3L559.4 562.9L563.8 561.0L568.2 562.9L572.6 568.4L577.0 573.5L581.4 577.7L585.8 580.4L590.2 580.1L594.5 576.4L598.9 568.7L603.3 569.0L607.7 577.8L612.1 586.8L616.5 594.1L620.9 600.6L625.3 610.2L629.7 623.0L634.1 638.0L638.5 653.0L642.9 669.0L647.3 680.9L651.6 681.8L656.0 680.0L660.4 679.9L664.8 676.8L669.2 666.6L673.6 651.2L678.0 637.8L682.4 625.9L686.8 617.5L691.2 616.3L695.6 618.6L700.0 622.1L704.3 631.2L708.7 642.7L713.1 654.7L717.5 666.8L721.9 674.5L726.3 662.0L730.7 650.1L735.1 648.1L739.5 647.7L743.9 648.3L748.3 659.3L752.7 669.3L757.1 679.5L761.4 686.9L765.8 689.8L770.2 690.5L774.6 689.0L779.0 684.7L783.4 684.4L787.8 685.6L792.2 686.5L796.6 682.4L801.0 670.6L805.4 650.9L809.8 626.8L814.1 610.4L818.5 601.6L822.9 595.6L827.3 585.3L831.7 574.7L836.1 570.9L840.5 570.4L844.9 568.2L849.3 563.6L853.7 563.1L858.1 567.4L862.5 577.0L866.9 584.4L871.2 590.4L875.6 592.8L880.0 586.3L884.4 573.8L888.8 561.5L893.2 554.0L897.6 548.8L902.0 544.8L906.4 544.5L910.8 547.2L915.2 554.8L919.6 562.7L923.9 571.8L928.3 581.5L932.7 593.7L937.1 605.9L941.5 610.8L945.9 609.3L950.3 613.4L954.7 619.7L959.1 622.4L963.5 624.9L967.9 626.3L972.3 625.4L976.7 615.7L981.0 602.6L985.4 593.4L989.8 586.8L994.2 602.7L998.6 615.0L1003.0 616.8L1007.4 614.9L1011.8 611.4L1016.2 605.8L1020.6 605.7L1025.0 606.1L1029.4 607.4L1033.7 603.9L1038.1 595.8L1042.5 585.8L1046.9 573.2L1051.3 562.7L1055.7 558.6L1060.1 556.2L1064.5 556.1L1068.9 559.9L1073.3 562.7L1077.7 565.2L1082.1 571.9L1086.5 581.3L1090.8 585.6L1095.2 583.8L1099.6 580.3L1104.0 575.6L1108.4 577.1L1112.8 585.6L1117.2 593.0L1121.6 595.3L1126.0 598.9L1130.4 609.1L1134.8 606.4L1139.2 606.8L1143.5 611.0L1147.9 626.9L1152.3 647.4L1156.7 665.1L1161.1 678.2L1165.5 689.7L1169.9 698.0L1174.3 704.5L1178.7 707.1L1183.1 702.6L1187.5 699.0L1191.9 696.9L1196.3 691.0L1200.6 683.5L1205.0 678.0L1209.4 674.8L1213.8 677.1L1218.2 681.7L1222.6 689.1L1227.0 696.8L1231.4 695.0L1235.8 682.6L1240.2 662.1L1244.6 642.7L1249.0 625.5L1253.3 604.9L1257.7 591.7L1262.1 585.7L1266.5 580.1L1270.9 587.3L1275.3 602.4L1279.7 618.0L1284.1 633.8L1288.5 649.5L1292.9 659.8L1297.3 661.6L1301.7 661.9L1306.1 665.5L1310.4 674.1L1314.8 671.0L1319.2 652.3L1323.6 629.7L1328.0 609.3L1332.4 590.1L1336.8 586.1L1341.2 590.9L1345.6 600.2L1350.0 612.9L1354.4 623.8L1358.8 628.1L1363.1 621.6L1367.5 611.8L1371.9 613.7L1376.3 621.9L1380.7 636.3L1385.1 652.7L1389.5 667.2L1393.9 680.2L1398.3 691.5L1402.7 694.0L1407.1 693.6L1411.5 693.1L1415.9 690.3L1420.2 684.8L1424.6 674.1L1429.0 657.8L1433.4 637.7L1437.8 612.1L1442.2 592.7L1446.6 584.5L1451.0 589.5L1455.4 596.6L1459.8 601.3L1464.2 607.7L1468.6 618.3L1472.9 631.7L1477.3 644.1L1481.7 652.3L1486.1 646.9L1490.5 630.5L1494.9 610.3L1499.3 594.4L1503.7 580.2L1508.1 569.6L1512.5 562.0L1516.9 556.2L1521.3 553.3L1525.7 554.5L1530.0 558.5L1534.4 567.9L1538.8 590.4L1543.2 618.3L1547.6 640.2L1552.0 653.5L1556.4 666.4L1560.8 679.6L1565.2 687.7L1569.6 693.9L1574.0 693.3L1578.4 692.3L1582.7 695.0L1587.1 698.1L1591.5 699.3L1595.9 702.2L1600.3 700.2L1604.7 693.8L1609.1 685.4L1613.5 680.1L1617.9 664.8L1622.3 650.3L1626.7 644.8L1631.1 644.7L1635.5 642.5L1639.8 620.9L1644.2 601.2L1648.6 592.4L1653.0 596.9L1657.4 606.1L1661.8 617.5L1666.2 626.3L1670.6 628.2L1675.0 621.7L1679.4 616.7L1683.8 615.4L1688.2 615.1L1692.5 609.4L1696.9 593.4L1701.3 579.7L1705.7 567.1L1710.1 562.2L1714.5 563.1L1718.9 560.3L1723.3 555.9L1727.7 554.6" stroke="#ff9800"/></g></g><g shape-rendering="geometricPrecision" fill="none" stroke="#f23645" stroke-width="2.5" stroke-linecap="round" stroke-linejoin="round"><path d="M282.8 271.5L300.2 511.5"/><path d="M281.8 495.5L300.2 511.8L316.6 493"/></g></svg><div class="usdt"></div><div class="lbl" style="left:1727px;top:160px;width:83px;height:19px;border-color:#089981"></div><div class="lbl" style="left:1727px;top:545px;width:49px;height:19px;border-color:#2962ff"><i style="background:#2962ff"></i></div><div class="lbl" style="left:1727px;top:564px;width:49px;height:19px;border-color:#ff9800"><i style="background:#ff9800"></i></div><div class="note"></div><div id="txt"><span class="t" id="hd0" style="left:10.72px;top:11.00px;font-size:13.6px;color:#dedede;letter-spacing:-0.111px;-webkit-text-stroke:0.45px #dedede;">bahramvahd</span><span class="t" id="hd1" style="left:89.41px;top:11.00px;font-size:13.6px;color:#dedede;letter-spacing:0.159px;-webkit-text-stroke:0.45px #dedede;">created</span><span class="t" id="hd2" style="left:140.75px;top:11.00px;font-size:13.6px;color:#dedede;letter-spacing:-0.530px;-webkit-text-stroke:0.45px #dedede;">with</span><span class="t" id="hd3" style="left:171.90px;top:11.00px;font-size:13.6px;color:#dedede;letter-spacing:-0.175px;-webkit-text-stroke:0.45px #dedede;">TradingView.com,</span><span class="t" id="hd4" style="left:281.80px;top:11.00px;font-size:13.6px;color:#dedede;-webkit-text-stroke:0.45px #dedede;transform:scale(0.8641,1);transform-origin:0 84.65%;">Aug</span><span class="t" id="hd5" style="left:308.64px;top:11.00px;font-size:13.6px;color:#dedede;-webkit-text-stroke:0.45px #dedede;transform:scale(0.7726,1);transform-origin:0 84.65%;">11,</span><span class="t" id="hd6" style="left:330.70px;top:11.00px;font-size:13.6px;color:#dedede;-webkit-text-stroke:0.45px #dedede;transform:scale(0.9318,1);transform-origin:0 84.65%;">2025</span><span class="t" id="hd7" style="left:363.78px;top:11.00px;font-size:13.6px;color:#dedede;letter-spacing:-0.397px;-webkit-text-stroke:0.45px #dedede;">13:15</span><span class="t" id="hd8" style="left:401.36px;top:11.00px;font-size:13.6px;color:#dedede;-webkit-text-stroke:0.45px #dedede;transform:scale(0.8610,1);transform-origin:0 84.65%;">UTC</span><span class="t" id="lw0" style="left:19.76px;top:41.00px;font-size:13.7px;color:#b2b2b2;letter-spacing:0.204px;-webkit-text-stroke:0.45px #b2b2b2;transform:scale(1.0000,1.07);transform-origin:0 84.65%;">Bitcoin</span><span class="t" id="lw1" style="left:67.76px;top:41.00px;font-size:13.7px;color:#b2b2b2;-webkit-text-stroke:0.45px #b2b2b2;transform:scale(1.0000,1.07);transform-origin:0 84.65%;">/</span><span class="t" id="lw2" style="left:78.30px;top:41.00px;font-size:13.7px;color:#b2b2b2;-webkit-text-stroke:0.45px #b2b2b2;transform:scale(0.9202,1.07);transform-origin:0 84.65%;">TetherUS</span><span class="t" id="lw3" style="left:135.13px;top:41.00px;font-size:13.7px;color:#b2b2b2;-webkit-text-stroke:0.45px #b2b2b2;transform:scale(1.0000,1.07);transform-origin:0 84.65%;">·</span><span class="t" id="lw4" style="left:144.44px;top:41.00px;font-size:13.7px;color:#b2b2b2;-webkit-text-stroke:0.45px #b2b2b2;transform:scale(0.8988,1.07);transform-origin:0 84.65%;">15</span><span class="t" id="lw5" style="left:163.53px;top:41.00px;font-size:13.7px;color:#b2b2b2;-webkit-text-stroke:0.45px #b2b2b2;transform:scale(1.0000,1.07);transform-origin:0 84.65%;">·</span><span class="t" id="lw6" style="left:171.59px;top:41.00px;font-size:13.7px;color:#b2b2b2;-webkit-text-stroke:0.45px #b2b2b2;transform:scale(0.8445,1.07);transform-origin:0 84.65%;">BINANCE</span><span class="t" id="lgO" style="left:231.77px;top:41.00px;font-size:13.7px;color:#b2b2b2;-webkit-text-stroke:0.45px #b2b2b2;transform:scale(1.0000,1.07);transform-origin:0 84.65%;">O</span><span class="t" id="lgOv" style="left:241.67px;top:41.00px;font-size:13.7px;color:#f23645;letter-spacing:-0.191px;-webkit-text-stroke:0.45px #f23645;transform:scale(1.0000,1.07);transform-origin:0 84.65%;">119,523.48</span><span class="t" id="lgH" style="left:314.96px;top:41.00px;font-size:13.7px;color:#b2b2b2;-webkit-text-stroke:0.45px #b2b2b2;transform:scale(1.0000,1.07);transform-origin:0 84.65%;">H</span><span class="t" id="lgHv" style="left:324.97px;top:41.00px;font-size:13.7px;color:#f23645;letter-spacing:-0.187px;-webkit-text-stroke:0.45px #f23645;transform:scale(1.0000,1.07);transform-origin:0 84.65%;">119,549.47</span><span class="t" id="lgL" style="left:398.86px;top:41.00px;font-size:13.7px;color:#b2b2b2;-webkit-text-stroke:0.45px #b2b2b2;transform:scale(1.0000,1.07);transform-origin:0 84.65%;">L</span><span class="t" id="lgLv" style="left:406.87px;top:41.00px;font-size:13.7px;color:#f23645;letter-spacing:-0.255px;-webkit-text-stroke:0.45px #f23645;transform:scale(1.0000,1.07);transform-origin:0 84.65%;">119,478.09</span><span class="t" id="lgC" style="left:480.45px;top:41.00px;font-size:13.7px;color:#b2b2b2;-webkit-text-stroke:0.45px #b2b2b2;transform:scale(1.0000,1.07);transform-origin:0 84.65%;">C</span><span class="t" id="lgCv" style="left:489.17px;top:41.00px;font-size:13.7px;color:#f23645;letter-spacing:-0.238px;-webkit-text-stroke:0.45px #f23645;transform:scale(1.0000,1.07);transform-origin:0 84.65%;">119,486.46</span><span class="t" id="lgD" style="left:563.63px;top:41.00px;font-size:13.7px;color:#f23645;letter-spacing:-0.461px;-webkit-text-stroke:0.45px #f23645;transform:scale(1.0000,1.07);transform-origin:0 84.65%;">−37.02 (−0.03%)</span><span class="t" id="sw0" style="left:19.82px;top:531.00px;font-size:13.7px;color:#b2b2b2;-webkit-text-stroke:0.45px #b2b2b2;transform:scale(0.8238,1.07);transform-origin:0 84.65%;">SMI</span><span class="t" id="sw1" style="left:44.67px;top:531.00px;font-size:13.7px;color:#b2b2b2;letter-spacing:-0.145px;-webkit-text-stroke:0.45px #b2b2b2;transform:scale(1.0000,1.07);transform-origin:0 84.65%;">(10,</span><span class="t" id="sw2" style="left:72.33px;top:531.00px;font-size:13.7px;color:#b2b2b2;letter-spacing:-0.383px;-webkit-text-stroke:0.45px #b2b2b2;transform:scale(1.0000,1.07);transform-origin:0 84.65%;">3,</span><span class="t" id="sw3" style="left:88.83px;top:531.00px;font-size:13.7px;color:#b2b2b2;letter-spacing:-0.561px;-webkit-text-stroke:0.45px #b2b2b2;transform:scale(1.0000,1.07);transform-origin:0 84.65%;">3)</span><span class="t" id="sm1" style="left:108.93px;top:531.00px;font-size:13.7px;color:#2962ff;letter-spacing:-0.503px;-webkit-text-stroke:0.45px #2962ff;transform:scale(1.0000,1.07);transform-origin:0 84.65%;">−86.87</span><span class="t" id="sm2" style="left:157.23px;top:531.00px;font-size:13.7px;color:#ff9800;letter-spacing:-0.445px;-webkit-text-stroke:0.45px #ff9800;transform:scale(1.0000,1.07);transform-origin:0 84.65%;">−84.70</span><span class="t" id="pa0" style="left:1736.40px;top:90.00px;font-size:13.3px;color:#a8a8a8;letter-spacing:0.188px;-webkit-text-stroke:0.45px #a8a8a8;">118,400.00</span><span class="t" id="pa1" style="left:1736.40px;top:136.00px;font-size:13.3px;color:#a8a8a8;letter-spacing:0.188px;-webkit-text-stroke:0.45px #a8a8a8;">118,000.00</span><span class="t" id="pa2" style="left:1736.40px;top:182.00px;font-size:13.3px;color:#a8a8a8;letter-spacing:0.188px;-webkit-text-stroke:0.45px #a8a8a8;">117,600.00</span><span class="t" id="pa3" style="left:1736.40px;top:228.00px;font-size:13.3px;color:#a8a8a8;letter-spacing:0.188px;-webkit-text-stroke:0.45px #a8a8a8;">117,200.00</span><span class="t" id="pa4" style="left:1736.40px;top:274.00px;font-size:13.3px;color:#a8a8a8;letter-spacing:0.188px;-webkit-text-stroke:0.45px #a8a8a8;">116,800.00</span><span class="t" id="pa5" style="left:1736.40px;top:320.00px;font-size:13.3px;color:#a8a8a8;letter-spacing:0.188px;-webkit-text-stroke:0.45px #a8a8a8;">116,400.00</span><span class="t" id="pa6" style="left:1736.40px;top:366.00px;font-size:13.3px;color:#a8a8a8;letter-spacing:0.188px;-webkit-text-stroke:0.45px #a8a8a8;">116,000.00</span><span class="t" id="pa7" style="left:1736.40px;top:413.00px;font-size:13.3px;color:#a8a8a8;letter-spacing:0.188px;-webkit-text-stroke:0.45px #a8a8a8;">115,600.00</span><span class="t" id="pa8" style="left:1736.40px;top:459.00px;font-size:13.3px;color:#a8a8a8;letter-spacing:0.188px;-webkit-text-stroke:0.45px #a8a8a8;">115,200.00</span><span class="t" id="pa9" style="left:1736.40px;top:505.00px;font-size:13.3px;color:#a8a8a8;letter-spacing:0.188px;-webkit-text-stroke:0.45px #a8a8a8;">114,800.00</span><span class="t" id="pcur" style="left:1736.40px;top:162.00px;font-size:13.3px;color:#07917b;letter-spacing:0.210px;-webkit-text-stroke:0.45px #07917b;">117,776.43</span><span class="t" id="oa0" style="left:1736.10px;top:587.00px;font-size:13.3px;color:#a8a8a8;letter-spacing:0.173px;-webkit-text-stroke:0.45px #a8a8a8;">40.00</span><span class="t" id="oa1" style="left:1735.94px;top:623.00px;font-size:13.3px;color:#a8a8a8;letter-spacing:0.425px;-webkit-text-stroke:0.45px #a8a8a8;">0.00</span><span class="t" id="oa2" style="left:1735.91px;top:661.00px;font-size:13.3px;color:#a8a8a8;letter-spacing:-0.004px;-webkit-text-stroke:0.45px #a8a8a8;">−40.00</span><span class="t" id="oa3" style="left:1735.91px;top:697.00px;font-size:13.3px;color:#a8a8a8;letter-spacing:-0.004px;-webkit-text-stroke:0.45px #a8a8a8;">−80.00</span><span class="t" id="o1" style="left:1735.90px;top:549.00px;font-size:13.3px;color:#2962ff;letter-spacing:0.255px;-webkit-text-stroke:0.45px #2962ff;">81.99</span><span class="t" id="o2" style="left:1735.90px;top:568.00px;font-size:13.3px;color:#ff9800;letter-spacing:0.174px;-webkit-text-stroke:0.45px #ff9800;">80.74</span><span class="t" id="usdt" style="left:1740.86px;top:43.00px;font-size:13.2px;color:#dedede;-webkit-text-stroke:0.45px #dedede;transform:scale(0.9084,1);transform-origin:0 84.65%;">USDT</span><span class="t" id="ta0" style="left:55.45px;top:739.00px;font-size:13.3px;color:#a8a8a8;letter-spacing:0.073px;-webkit-text-stroke:0.45px #a8a8a8;">12:00</span><span class="t" id="ta1" style="left:160.75px;top:739.00px;font-size:13.3px;color:#a8a8a8;letter-spacing:0.073px;-webkit-text-stroke:0.45px #a8a8a8;">18:00</span><span class="t" id="ta2" style="left:279.15px;top:739.00px;font-size:13.3px;color:#d6d6d6;font-weight:700;">6</span><span class="t" id="ta3" style="left:371.99px;top:739.00px;font-size:13.3px;color:#a8a8a8;letter-spacing:-0.064px;-webkit-text-stroke:0.45px #a8a8a8;">06:00</span><span class="t" id="ta4" style="left:476.85px;top:739.00px;font-size:13.3px;color:#a8a8a8;letter-spacing:0.073px;-webkit-text-stroke:0.45px #a8a8a8;">12:00</span><span class="t" id="ta5" style="left:582.15px;top:739.00px;font-size:13.3px;color:#a8a8a8;letter-spacing:0.073px;-webkit-text-stroke:0.45px #a8a8a8;">18:00</span><span class="t" id="ta6" style="left:700.69px;top:739.00px;font-size:13.3px;color:#d6d6d6;font-weight:700;">7</span><span class="t" id="ta7" style="left:793.49px;top:739.00px;font-size:13.3px;color:#a8a8a8;letter-spacing:-0.064px;-webkit-text-stroke:0.45px #a8a8a8;">06:00</span><span class="t" id="ta8" style="left:898.35px;top:739.00px;font-size:13.3px;color:#a8a8a8;letter-spacing:0.073px;-webkit-text-stroke:0.45px #a8a8a8;">12:00</span><span class="t" id="ta9" style="left:1003.65px;top:739.00px;font-size:13.3px;color:#a8a8a8;letter-spacing:0.073px;-webkit-text-stroke:0.45px #a8a8a8;">18:00</span><span class="t" id="ta10" style="left:1122.30px;top:739.00px;font-size:13.3px;color:#d6d6d6;font-weight:700;">8</span><span class="t" id="ta11" style="left:1214.99px;top:739.00px;font-size:13.3px;color:#a8a8a8;letter-spacing:-0.064px;-webkit-text-stroke:0.45px #a8a8a8;">06:00</span><span class="t" id="ta12" style="left:1319.75px;top:739.00px;font-size:13.3px;color:#a8a8a8;letter-spacing:0.073px;-webkit-text-stroke:0.45px #a8a8a8;">12:00</span><span class="t" id="ta13" style="left:1425.15px;top:739.00px;font-size:13.3px;color:#a8a8a8;letter-spacing:0.073px;-webkit-text-stroke:0.45px #a8a8a8;">18:00</span><span class="t" id="ta14" style="left:1543.75px;top:739.00px;font-size:13.3px;color:#d6d6d6;font-weight:700;">9</span><span class="t" id="ta15" style="left:1636.39px;top:739.00px;font-size:13.3px;color:#a8a8a8;letter-spacing:-0.064px;-webkit-text-stroke:0.45px #a8a8a8;">06:00</span><span class="t" id="an1" style="left:185.42px;top:225.00px;font-size:23.5px;color:#ffffff;font-weight:700;letter-spacing:-0.034px;transform:scale(1.0000,1.07);transform-origin:0 84.65%;">Stochastic</span><span class="t" id="logo" style="left:55.06px;top:784.00px;font-size:23.2px;color:#d9d9d9;font-weight:700;letter-spacing:-0.056px;">TradingView</span><span class="t" id="an2" dir="rtl" style="left:319.7px;top:226.6px;font-size:17.7px;transform:scaleY(1.13);transform-origin:0 50%;font-weight:700;color:#fff;font-family:'DejaVu Sans',sans-serif;">اندیکاتور</span></div><svg style="left:13px;top:785.7px" width="36" height="18" viewBox="0 0 36 18"><path fill="#d9d9d9" d="M0 0H14.1V17.1H6.9V7.8H0zM24.4 0H33.4L27.4 17.1H19z"/><circle fill="#d9d9d9" cx="18.6" cy="3.4" r="3.4"/></svg></body></html>
